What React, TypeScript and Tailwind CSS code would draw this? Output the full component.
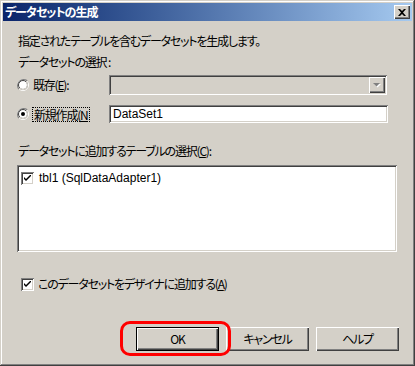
const jp = "font-['Noto_Sans_CJK_JP',sans-serif] [font-feature-settings:'palt'] tracking-[-1.2px]"
const latin = "font-['Liberation_Sans','Noto_Sans_CJK_JP',sans-serif] tracking-normal"
const sunken = "shadow-[inset_1px_1px_#808080,inset_-1px_-1px_#ffffff,inset_2px_2px_#404040,inset_-2px_-2px_#d4d0c8]"
const raised = "shadow-[inset_1px_1px_#ffffff,inset_-1px_-1px_#404040,inset_-2px_-2px_#808080]"

function Radio({ checked }: { checked?: boolean }) {
    return (
        <svg width="12" height="12" viewBox="0 0 12 12" className="shrink-0">
            <circle cx="6" cy="6" r="5.5" fill="none" stroke="#ffffff" />
            <path d="M10.2 1.8 A6 6 0 0 0 1.8 10.2" fill="none" stroke="#808080" strokeWidth="1.2" />
            <circle cx="6" cy="6" r="4.5" fill="#ffffff" stroke="#404040" strokeWidth="1" />
            <path d="M9.2 2.8 A4.5 4.5 0 0 1 2.8 9.2" fill="none" stroke="#d4d0c8" strokeWidth="1.2" />
            {checked && <circle cx="6" cy="6" r="2" fill="#000000" />}
        </svg>
    )
}

function Check() {
    return (
        <div className={`w-[13px] h-[13px] bg-white shrink-0 flex items-center justify-center ${sunken}`}>
            <svg width="7" height="7" viewBox="0 0 7 7">
                <path d="M0 2 L0 4 L2 6 L7 1 L7 -1 L2 4 Z" fill="#000000" />
            </svg>
        </div>
    )
}

function Button({ label, isDefault }: { label: string, isDefault?: boolean }) {
    return (
        <div className={`w-[83px] h-[24px] ${isDefault ? "border border-black" : ""} bg-[#d4d0c8]`}>
            <div className={`w-full h-full flex items-center justify-center text-[12px] text-black ${raised}`}>
                {label}
            </div>
        </div>
    )
}

function App() {
    return (
        <div className={`w-[415px] h-[366px] bg-[#d4d0c8] p-[3px] flex flex-col shadow-[inset_-1px_-1px_#404040,inset_1px_1px_#d4d0c8,inset_-2px_-2px_#808080,inset_2px_2px_#ffffff] ${jp}`}>
            {/* Title bar */}
            <div className="h-[18px] shrink-0 flex items-center justify-between pl-[2px] pr-[2px] bg-gradient-to-r from-[#0a246a] to-[#a6caf0]">
                <span className="text-white font-bold text-[12px] leading-[18px] tracking-[-1px]">データセットの生成</span>
                <div className={`w-[16px] h-[14px] bg-[#d4d0c8] flex items-center justify-center ${raised}`}>
                    <svg width="8" height="7" viewBox="0 0 8 7">
                        <path d="M0 0 H2 L4 2 L6 0 H8 L5 3.5 L8 7 H6 L4 5 L2 7 H0 L3 3.5 Z" fill="#000000" />
                    </svg>
                </div>
            </div>

            {/* Body */}
            <div className="flex flex-col pl-[14px] text-[12px] leading-[16px] text-black">
                <p className="mt-[12px] ml-[1px]">指定されたテーブルを含むデータセットを生成します。</p>
                <p className="mt-[5px] ml-[1px]">データセットの選択 :</p>

                <div className="mt-[5px] h-[20px] flex items-center">
                    <div className="w-[92px] flex items-center gap-[4px]">
                        <Radio />
                        <span>既存(<u>E</u>):</span>
                    </div>
                    <div className={`w-[278px] h-[20px] bg-[#d4d0c8] flex justify-end p-[2px] ${sunken}`}>
                        <div className={`w-[16px] h-[16px] flex items-center justify-center ${raised}`}>
                            <svg width="8" height="5" viewBox="0 0 8 5">
                                <path d="M1 1 H8 L4.5 4.5 Z" fill="#ffffff" />
                                <path d="M0 0 H7 L3.5 3.5 Z" fill="#808080" />
                            </svg>
                        </div>
                    </div>
                </div>

                <div className="mt-[10px] h-[18px] flex items-center">
                    <div className="w-[92px] flex items-center gap-[3px]">
                        <Radio checked />
                        <span className="border border-dotted border-black px-[1px] leading-[13px]">新規作成(<u>N</u></span>
                    </div>
                    <div className={`w-[279px] h-[18px] bg-white flex items-center pl-[4px] ${sunken} ${latin}`}>
                        DataSet1
                    </div>
                </div>

                <p className="mt-[20px] ml-[1px]">データセットに追加するテーブルの選択(<u>C</u>):</p>

                <div className={`mt-[6px] w-[380px] h-[87px] bg-white p-[2px] ${sunken}`}>
                    <div className="flex items-center gap-[5px] pl-[2px] pt-[3px]">
                        <Check />
                        <span className={`${latin} tracking-[-0.4px]`}>tbl1 (SqlDataAdapter1)</span>
                    </div>
                </div>

                <div className="mt-[24px] h-[16px] flex items-center gap-[4px] pl-[4px]">
                    <Check />
                    <span>このデータセットをデザイナに追加する(<u>A</u>)</span>
                </div>

                <div className="mt-[35px] ml-[119px] flex gap-[7px]">
                    <div className="relative">
                        <Button label="OK" isDefault />
                        <div className="absolute left-[-16px] top-[-6px] w-[111px] h-[35px] border-[3px] border-[#ff0000] rounded-[10px] pointer-events-none" />
                    </div>
                    <Button label="キャンセル" />
                    <Button label="ヘルプ" />
                </div>
            </div>
        </div>
    )
}

export default App
